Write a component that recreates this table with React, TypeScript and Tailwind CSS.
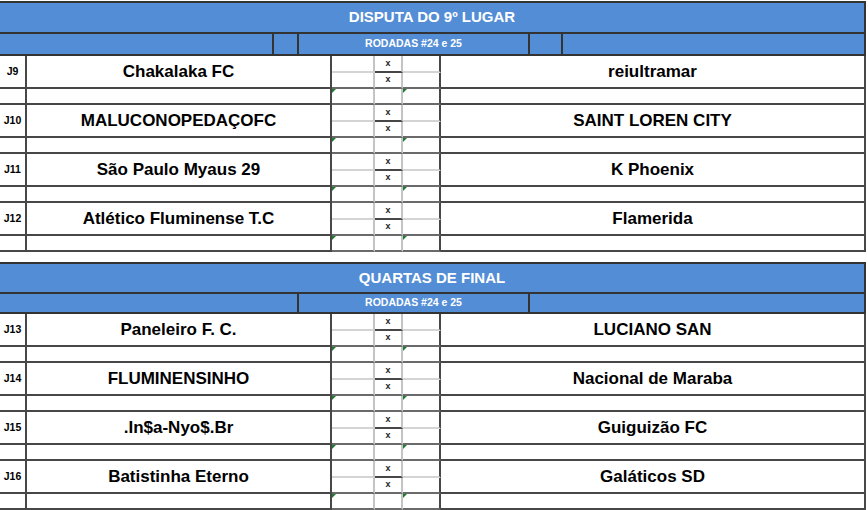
import React from "react";

type Match = { id: string; home: string; away: string };

const nonoLugar: Match[] = [
  { id: "J9", home: "Chakalaka FC", away: "reiultramar" },
  { id: "J10", home: "MALUCONOPEDAÇOFC", away: "SAINT LOREN CITY" },
  { id: "J11", home: "São Paulo Myaus 29", away: "K Phoenix" },
  { id: "J12", home: "Atlético Fluminense T.C", away: "Flamerida" },
];

const quartas: Match[] = [
  { id: "J13", home: "Paneleiro F. C.", away: "LUCIANO SAN" },
  { id: "J14", home: "FLUMINENSINHO", away: "Nacional de Maraba" },
  { id: "J15", home: ".In$a-Nyo$.Br", away: "Guiguizão FC" },
  { id: "J16", home: "Batistinha Eterno", away: "Galáticos SD" },
];

const Flag = () => (
  <span className="absolute left-0 top-0 w-0 h-0 border-t-[4px] border-t-[#1f7a2e] border-r-[4px] border-r-transparent" />
);

const MatchBlock: React.FC<{ m: Match }> = ({ m }) => (
  <div className="grid grid-cols-[27px_305px_43px_28px_38px_425px] grid-rows-[17px_16px_16px]">
    <div className="row-span-2 border-r-2 border-b-2 border-[#474747] flex items-center justify-center pt-px text-[10.5px] font-bold text-black">
      {m.id}
    </div>
    <div className="row-span-2 border-r-2 border-b-2 border-[#474747] flex items-center justify-center pt-px text-[17px] font-bold text-black">
      {m.home}
    </div>
    <div className="border-r-2 border-r-[#c4c4c4] border-b-2 border-b-[#d4d4d4]" />
    <div className="border-r-2 border-r-[#c4c4c4] border-b-2 border-b-[#474747] flex items-center justify-center text-[9px] font-bold text-[#222]">
      x
    </div>
    <div className="border-r-2 border-r-[#474747] border-b-2 border-b-[#d4d4d4]" />
    <div className="row-span-2 border-r-2 border-b-2 border-[#474747] flex items-center justify-center pt-px text-[17px] font-bold text-black">
      {m.away}
    </div>
    <div className="border-r-2 border-r-[#c4c4c4] border-b-2 border-b-[#6a6a6a]" />
    <div className="border-r-2 border-r-[#c4c4c4] border-b-2 border-b-[#6a6a6a] flex items-center justify-center text-[9px] font-bold text-[#222]">
      x
    </div>
    <div className="border-r-2 border-r-[#474747] border-b-2 border-b-[#6a6a6a]" />

    <div className="border-r-2 border-b-2 border-[#474747]" />
    <div className="border-r-2 border-b-2 border-[#474747]" />
    <div className="relative border-r-2 border-r-[#c4c4c4] border-b-2 border-b-[#6a6a6a]">
      <Flag />
    </div>
    <div className="border-r-2 border-r-[#c4c4c4] border-b-2 border-b-[#6a6a6a]" />
    <div className="relative border-r-2 border-r-[#474747] border-b-2 border-b-[#6a6a6a]">
      <Flag />
    </div>
    <div className="border-r-2 border-b-2 border-[#474747]" />
  </div>
);

const Section: React.FC<{
  title: string;
  matches: Match[];
  sub: "split" | "plain";
}> = ({ title, matches, sub }) => (
  <div className="w-[866px]">
    <div
      className={
        sub === "split"
          ? "h-[33px] border-t-2 border-b-2 border-r-2 border-[#333] bg-[#538dd5] flex items-center justify-center text-white text-[15px] font-bold"
          : "h-[32px] border-t-2 border-b-2 border-r-2 border-[#333] bg-[#538dd5] flex items-center justify-center text-white text-[15px] font-bold"
      }
    >
      {title}
    </div>
    {sub === "split" ? (
      <div className="h-[22px] flex bg-[#538dd5] text-white text-[10.5px] font-bold">
        <div className="w-[274px] border-r-2 border-b-2 border-[#333]" />
        <div className="w-[25px] border-r-2 border-b-2 border-[#333]" />
        <div className="w-[231px] border-r-2 border-b-2 border-[#333] flex items-center justify-center">
          RODADAS #24 e 25
        </div>
        <div className="w-[33px] border-r-2 border-b-2 border-[#333]" />
        <div className="w-[303px] border-r-2 border-b-2 border-[#333]" />
      </div>
    ) : (
      <div className="h-[20px] flex bg-[#538dd5] text-white text-[10.5px] font-bold">
        <div className="w-[299px] border-r-2 border-b-2 border-[#333]" />
        <div className="w-[231px] border-r-2 border-b-2 border-[#333] flex items-center justify-center">
          RODADAS #24 e 25
        </div>
        <div className="w-[336px] border-r-2 border-b-2 border-[#333]" />
      </div>
    )}
    {matches.map((m) => (
      <MatchBlock key={m.id} m={m} />
    ))}
  </div>
);

export default function App() {
  return (
    <div className="w-[868px] h-[510px] bg-white pt-px overflow-hidden font-['Liberation_Sans',Arial,sans-serif]">
      <Section title="DISPUTA DO 9º LUGAR" matches={nonoLugar} sub="split" />
      <div className="mt-[10px]">
        <Section title="QUARTAS DE FINAL" matches={quartas} sub="plain" />
      </div>
    </div>
  );
}
